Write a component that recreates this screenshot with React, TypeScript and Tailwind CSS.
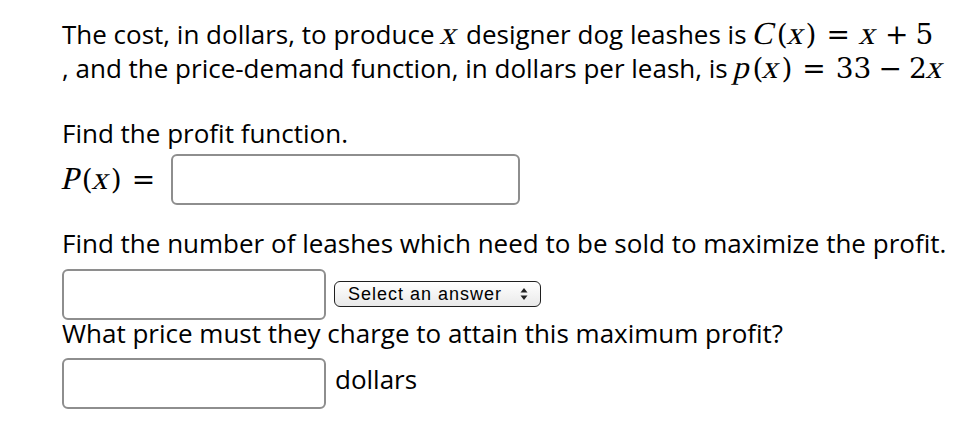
const MATH = "font-['DejaVu_Serif',serif] text-[28px] leading-[1]"

// italic faces are not reliable here, so lean the letters by hand
function V({ children }: { children: React.ReactNode }) {
  return (
    <span className="inline-block -skew-x-[14deg] font-['Liberation_Serif',serif] text-[32px] mx-[1px]">
      {children}
    </span>
  )
}

function Op({ children, wide }: { children: React.ReactNode; wide?: boolean }) {
  return <span className={wide ? 'mx-[10px]' : 'mx-[7px]'}>{children}</span>
}

function Box({ className }: { className: string }) {
  return <div className={`border-2 border-[#8e8e8e] rounded-[6px] bg-white ${className}`} />
}

export default function App() {
  return (
    <div className="min-h-screen bg-white text-black font-['Open_Sans',sans-serif] text-[26px] leading-[34px] px-[62px] pt-[17px]">
      <p className="whitespace-nowrap">
        The cost, in dollars, to produce <span className={MATH}><V>x</V></span> designer dog leashes is{' '}
        <span className={MATH}>
          <V>C</V>(<V>x</V>)<Op wide>=</Op><V>x</V><Op>+</Op>5
        </span>
        <br />, and the price-demand function, in dollars per leash, is{' '}
        <span className={MATH}>
          <V>p</V>(<V>x</V>)<Op wide>=</Op>33<Op>−</Op>2<V>x</V>
        </span>
      </p>

      <p className="mt-[31px]">Find the profit function.</p>
      <div className="flex items-center mt-[4px]">
        <span className={`${MATH} -mt-[4px]`}>
          <V>P</V>(<V>x</V>)<Op wide>=</Op>
        </span>
        <Box className="ml-[6px] w-[349px] h-[51px]" />
      </div>

      <p className="mt-[21px] whitespace-nowrap">
        Find the number of leashes which need to be sold to maximize the profit.
      </p>
      <div className="flex items-start mt-[9px] gap-[8px]">
        <Box className="w-[264px] h-[51px]" />
        <div className="mt-[12px] h-[26px] w-[207px] flex items-center justify-between pl-[13px] pr-[12px] border border-[#1f1f1f] rounded-[6px] bg-gradient-to-b from-white to-[#e9e9e9] font-['Liberation_Sans',sans-serif] text-[18px] tracking-[1px] leading-none">
          <span>Select an answer</span>
          <svg width="8" height="14" viewBox="0 0 8 14">
            <path d="M4 1 L7.5 5.5 H0.5 Z" fill="#222" />
            <path d="M4 13 L7.5 8.5 H0.5 Z" fill="#222" />
          </svg>
        </div>
      </div>

      <p className="-mt-[4px] whitespace-nowrap">What price must they charge to attain this maximum profit?</p>
      <div className="flex items-center mt-[8px] gap-[9px]">
        <Box className="w-[264px] h-[51px]" />
        <span className="-mt-[9px]">dollars</span>
      </div>
    </div>
  )
}
